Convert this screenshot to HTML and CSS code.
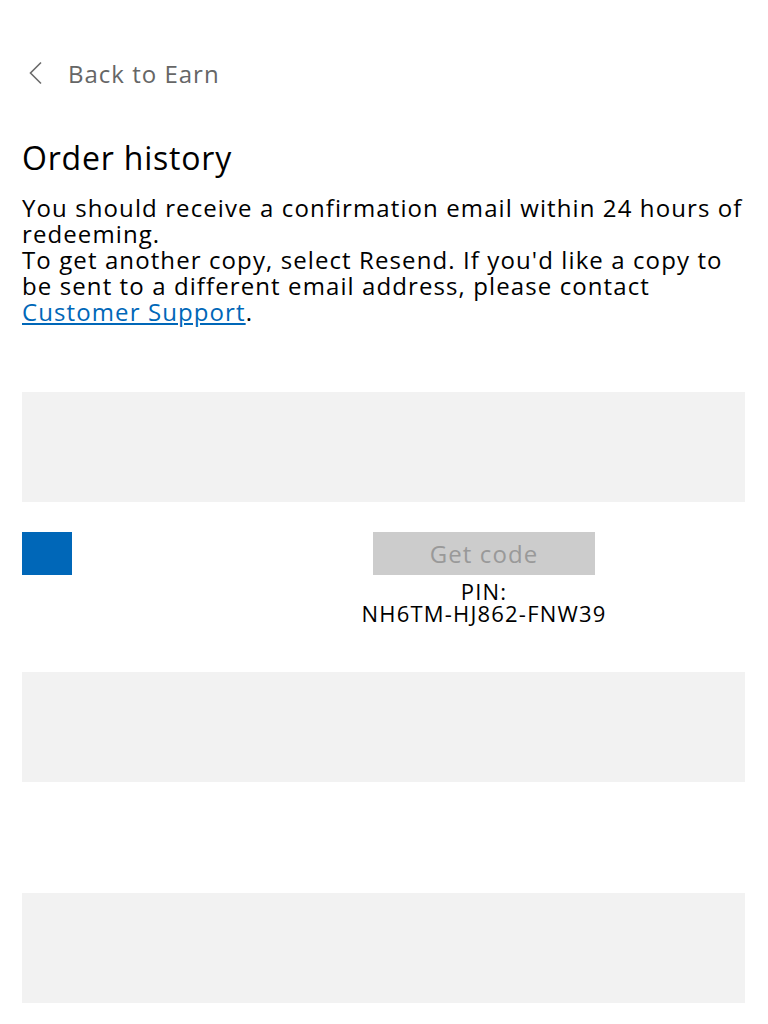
FILE: index.html
```html
<!DOCTYPE html>
<html lang="en">
<head>
<meta charset="utf-8">
<title>Order history</title>
<link rel="stylesheet" href="styles.css">
</head>
<body>
<main class="page">
  <a class="back" href="#">
    <svg class="back-icon" width="16" height="24" viewBox="0 0 16 24" aria-hidden="true">
      <path d="M14 1.5 L3.5 12 L14 22.5" fill="none" stroke="#6b6b6b" stroke-width="1.6"/>
    </svg>
    <span>Back to Earn</span>
  </a>

  <h1 class="title">Order history</h1>

  <p class="intro">
    You should receive a confirmation email within 24 hours of redeeming.<br>
    To get another copy, select Resend. If you'd like a copy to be sent to a different email address, please contact <a href="#" class="link">Customer Support</a>.
  </p>

  <section class="orders">
    <div class="order-card"></div>

    <div class="order-row">
      <div class="order-thumb"></div>
      <div class="order-action">
        <button class="btn-code" disabled>Get code</button>
        <div class="pin">PIN:<br>NH6TM-HJ862-FNW39</div>
      </div>
    </div>

    <div class="order-card"></div>
    <div class="order-card order-card--spaced"></div>
  </section>
</main>
</body>
</html>
```

FILE: styles.css
```css
* {
  box-sizing: border-box;
}

body {
  margin: 0;
  background: #ffffff;
  color: #000000;
  font-family: "Open Sans", "Noto Sans", "Liberation Sans", sans-serif;
}

.page {
  padding: 59px 23px 0 22px;
}

.back {
  display: flex;
  align-items: center;
  gap: 25px;
  height: 28px;
  padding-left: 5px;
  color: #666666;
  text-decoration: none;
  font-size: 24px;
  letter-spacing: 1px;
}

.back-icon {
  display: block;
}

.title {
  margin: 51px 0 0;
  font-size: 32px;
  font-weight: 400;
  line-height: 40px;
  letter-spacing: 0.8px;
}

.intro {
  margin: 17px -7px 0 0;
  font-size: 24px;
  line-height: 26px;
  letter-spacing: 1.1px;
}

.link {
  color: #0067b8;
  text-decoration: underline;
}

.orders {
  margin-top: 67px;
}

.order-card {
  height: 110px;
  background: #f2f2f2;
}

.order-row {
  display: flex;
  align-items: flex-start;
  margin-top: 30px;
  height: 140px;
}

.order-thumb {
  width: 50px;
  height: 43px;
  background: #0067b8;
}

.order-action {
  margin-left: 301px;
  width: 222px;
  display: flex;
  flex-direction: column;
  align-items: center;
}

.btn-code {
  width: 222px;
  height: 43px;
  border: 0;
  background: #cccccc;
  color: #999999;
  font-family: inherit;
  font-size: 24px;
  letter-spacing: 1.1px;
  padding: 0;
}

.pin {
  margin-top: 5px;
  text-align: center;
  font-size: 22px;
  line-height: 22px;
  letter-spacing: 1.2px;
  white-space: nowrap;
}

.order-card--spaced {
  margin-top: 111px;
}
```
